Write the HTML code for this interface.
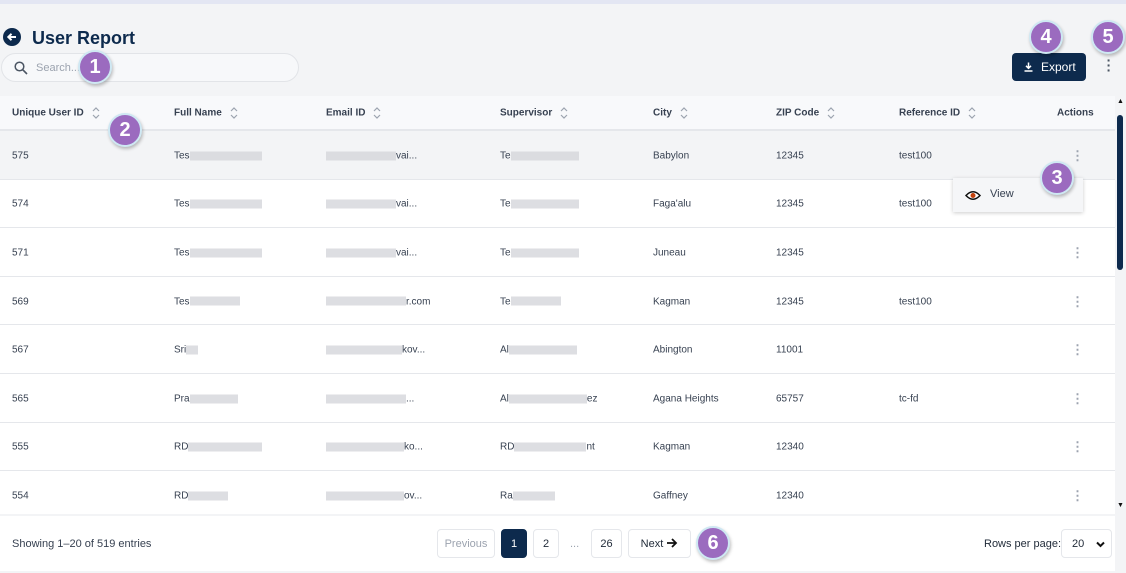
<!DOCTYPE html>
<html><head><style>
*{box-sizing:border-box;margin:0;padding:0}
body{width:1126px;height:573px;overflow:hidden;background:#f3f4f6;font-family:"Liberation Sans",sans-serif;position:relative;color:#1f2937}
.top{position:absolute;left:0;top:0;width:1126px;height:4px;background:#e3e6f3}
h1{position:absolute;left:32px;top:28px;font-size:18px;font-weight:bold;color:#0d2a4d}
.back{position:absolute;left:3px;top:28px;width:18px;height:18px;border-radius:50%;background:#0d2a4d}
.search{position:absolute;left:1px;top:53px;width:298px;height:29px;border:1px solid #e2e4e8;border-radius:15px;background:#f7f8fa;font-size:11px;color:#9ca3af;padding-left:34px;line-height:28px}
.export{position:absolute;left:1012px;top:53px;width:74px;height:28px;background:#0d2a4d;border-radius:4px;color:#fff;font-size:12px;line-height:28px;padding-left:29px}
.table{position:absolute;left:0;top:96px;width:1115px;height:418px;background:#fff;overflow:hidden}
.hdr{height:35px;background:#f8f9fb;border-bottom:2px solid #e5e7eb;position:relative;font-size:10px;font-weight:bold;color:#374151}
.row{height:48.6px;border-bottom:1px solid #e5e7eb;position:relative;font-size:10px;color:#374151}
.c{position:absolute;top:50%;transform:translateY(-50%);white-space:nowrap}
.row .c{top:52%}
.blur{display:inline-block;height:9px;background:#d4d6db;vertical-align:middle;opacity:.8}
.dots{color:#9ca3af;font-size:13px;font-weight:bold}
.sort{display:inline-block;vertical-align:middle;margin-left:8px}
.badge{position:absolute;width:34px;height:34px;border-radius:50%;background:#9b6bbf;border:2px solid #cfe8f3;color:#fff;font-weight:bold;font-size:20px;text-align:center;line-height:30px;box-shadow:1px 2px 3px rgba(0,0,0,.25)}
.foot{position:absolute;left:0;top:516px;width:1115px;height:55px;background:#fff;font-size:11px}
.pb{position:absolute;top:13px;height:29px;border:1px solid #e5e7eb;border-radius:4px;text-align:center;line-height:28px;background:#fff}
.sb{position:absolute;left:1115px;top:95px;width:11px;height:419px;background:#f3f4f6}
</style></head><body>
<div class="top"></div>
<div class="back"><svg width="18" height="18" viewBox="0 0 18 18"><path d="M13 9H5.5M8.5 5.8L5.3 9l3.2 3.2" fill="none" stroke="#fff" stroke-width="2"/></svg></div>
<h1>User Report</h1>
<div class="search"><svg style="position:absolute;left:12px;top:7px" width="14" height="14" viewBox="0 0 14 14"><circle cx="5.5" cy="5.5" r="4.3" fill="none" stroke="#4b5563" stroke-width="1.5"/><path d="M8.6 8.6L13 13" stroke="#4b5563" stroke-width="1.6"/></svg>Search...</div>
<div class="export"><svg style="position:absolute;left:12px;top:9px" width="9" height="10" viewBox="0 0 9 10"><path d="M4.5 0.5V6M2 3.8l2.5 2.5L7 3.8M0.5 9h8" fill="none" stroke="#fff" stroke-width="1.5"/></svg>Export</div>
<div style="position:absolute;left:1106px;top:58px;font-size:14px;color:#4b5563;font-weight:bold;line-height:5px;width:6px;text-align:center">·<br>·<br>·</div>
<div class="table">
<div class="hdr">
<span class="c" style="left:12px">Unique User ID<svg class="sort" width="8" height="13" viewBox="0 0 8 13"><path d="M1 4.5L4 1.5 7 4.5M1 8.5l3 3 3-3" fill="none" stroke="#9ca3af" stroke-width="1.2"/></svg></span>
<span class="c" style="left:174px">Full Name<svg class="sort" width="8" height="13" viewBox="0 0 8 13"><path d="M1 4.5L4 1.5 7 4.5M1 8.5l3 3 3-3" fill="none" stroke="#9ca3af" stroke-width="1.2"/></svg></span>
<span class="c" style="left:326px">Email ID<svg class="sort" width="8" height="13" viewBox="0 0 8 13"><path d="M1 4.5L4 1.5 7 4.5M1 8.5l3 3 3-3" fill="none" stroke="#9ca3af" stroke-width="1.2"/></svg></span>
<span class="c" style="left:500px">Supervisor<svg class="sort" width="8" height="13" viewBox="0 0 8 13"><path d="M1 4.5L4 1.5 7 4.5M1 8.5l3 3 3-3" fill="none" stroke="#9ca3af" stroke-width="1.2"/></svg></span>
<span class="c" style="left:653px">City<svg class="sort" width="8" height="13" viewBox="0 0 8 13"><path d="M1 4.5L4 1.5 7 4.5M1 8.5l3 3 3-3" fill="none" stroke="#9ca3af" stroke-width="1.2"/></svg></span>
<span class="c" style="left:776px">ZIP Code<svg class="sort" width="8" height="13" viewBox="0 0 8 13"><path d="M1 4.5L4 1.5 7 4.5M1 8.5l3 3 3-3" fill="none" stroke="#9ca3af" stroke-width="1.2"/></svg></span>
<span class="c" style="left:899px">Reference ID<svg class="sort" width="8" height="13" viewBox="0 0 8 13"><path d="M1 4.5L4 1.5 7 4.5M1 8.5l3 3 3-3" fill="none" stroke="#9ca3af" stroke-width="1.2"/></svg></span>
<span class="c" style="left:1057px">Actions</span>
</div>
<div class="row" style="background:#f3f4f6"><span class="c" style="left:12px">575</span><span class="c" style="left:174px">Tes<span class="blur" style="width:72px"></span></span><span class="c" style="left:326px"><span class="blur" style="width:70px"></span>vai...</span><span class="c" style="left:500px">Te<span class="blur" style="width:68px"></span></span><span class="c" style="left:653px">Babylon</span><span class="c" style="left:776px">12345</span><span class="c" style="left:899px">test100</span><span class="c dots" style="left:1071px">⋮</span></div>
<div class="row"><span class="c" style="left:12px">574</span><span class="c" style="left:174px">Tes<span class="blur" style="width:72px"></span></span><span class="c" style="left:326px"><span class="blur" style="width:70px"></span>vai...</span><span class="c" style="left:500px">Te<span class="blur" style="width:68px"></span></span><span class="c" style="left:653px">Faga'alu</span><span class="c" style="left:776px">12345</span><span class="c" style="left:899px">test100</span></div>
<div class="row"><span class="c" style="left:12px">571</span><span class="c" style="left:174px">Tes<span class="blur" style="width:72px"></span></span><span class="c" style="left:326px"><span class="blur" style="width:70px"></span>vai...</span><span class="c" style="left:500px">Te<span class="blur" style="width:68px"></span></span><span class="c" style="left:653px">Juneau</span><span class="c" style="left:776px">12345</span><span class="c dots" style="left:1071px">⋮</span></div>
<div class="row"><span class="c" style="left:12px">569</span><span class="c" style="left:174px">Tes<span class="blur" style="width:50px"></span></span><span class="c" style="left:326px"><span class="blur" style="width:80px"></span>r.com</span><span class="c" style="left:500px">Te<span class="blur" style="width:50px"></span></span><span class="c" style="left:653px">Kagman</span><span class="c" style="left:776px">12345</span><span class="c" style="left:899px">test100</span><span class="c dots" style="left:1071px">⋮</span></div>
<div class="row"><span class="c" style="left:12px">567</span><span class="c" style="left:174px">Sri<span class="blur" style="width:12px"></span></span><span class="c" style="left:326px"><span class="blur" style="width:76px"></span>kov...</span><span class="c" style="left:500px">Al<span class="blur" style="width:68px"></span></span><span class="c" style="left:653px">Abington</span><span class="c" style="left:776px">11001</span><span class="c dots" style="left:1071px">⋮</span></div>
<div class="row"><span class="c" style="left:12px">565</span><span class="c" style="left:174px">Pra<span class="blur" style="width:48px"></span></span><span class="c" style="left:326px"><span class="blur" style="width:80px"></span>...</span><span class="c" style="left:500px">Al<span class="blur" style="width:78px"></span>ez</span><span class="c" style="left:653px">Agana Heights</span><span class="c" style="left:776px">65757</span><span class="c" style="left:899px">tc-fd</span><span class="c dots" style="left:1071px">⋮</span></div>
<div class="row"><span class="c" style="left:12px">555</span><span class="c" style="left:174px">RD<span class="blur" style="width:74px"></span></span><span class="c" style="left:326px"><span class="blur" style="width:78px"></span>ko...</span><span class="c" style="left:500px">RD<span class="blur" style="width:72px"></span>nt</span><span class="c" style="left:653px">Kagman</span><span class="c" style="left:776px">12340</span><span class="c dots" style="left:1071px">⋮</span></div>
<div class="row"><span class="c" style="left:12px">554</span><span class="c" style="left:174px">RD<span class="blur" style="width:40px"></span></span><span class="c" style="left:326px"><span class="blur" style="width:78px"></span>ov...</span><span class="c" style="left:500px">Ra<span class="blur" style="width:42px"></span></span><span class="c" style="left:653px">Gaffney</span><span class="c" style="left:776px">12340</span><span class="c dots" style="left:1071px">⋮</span></div>
</div>
<div style="position:absolute;left:953px;top:178px;width:130px;height:34px;background:#f5f6f8;box-shadow:0 1px 4px rgba(0,0,0,.2);font-size:11px;color:#374151">
<svg style="position:absolute;left:12px;top:12px" width="16" height="11" viewBox="0 0 16 11"><path d="M1 5.5Q8 -2 15 5.5Q8 13 1 5.5Z" fill="#fff" stroke="#111" stroke-width="1.5"/><circle cx="8" cy="5.5" r="2.5" fill="#c2410c"/></svg>
<span style="position:absolute;left:37px;top:10px">View</span></div>
<div class="sb"><div style="position:absolute;left:2px;top:20px;width:6px;height:155px;background:#0d2a4d;border-radius:3px"></div><div style="position:absolute;left:2px;top:3px;font-size:7px;color:#111">▲</div><div style="position:absolute;left:2px;top:407px;font-size:7px;color:#111">▼</div></div>
<div class="foot">
<span style="position:absolute;left:12px;top:22px;color:#374151">Showing 1–20 of 519 entries</span>
<div class="pb" style="left:437px;width:58px;color:#9ca3af">Previous</div>
<div class="pb" style="left:501px;width:26px;background:#0d2a4d;color:#fff;border-color:#0d2a4d">1</div>
<div class="pb" style="left:533px;width:26px">2</div>
<span style="position:absolute;left:570px;top:22px;color:#9ca3af">...</span>
<div class="pb" style="left:591px;width:31px">26</div>
<div class="pb" style="left:628px;width:63px">Next <svg width="12" height="10" viewBox="0 0 12 10" style="vertical-align:-1px"><path d="M1 5h9M6 1l4 4-4 4" fill="none" stroke="#111" stroke-width="1.8"/></svg></div>
<span style="position:absolute;left:984px;top:22px">Rows per page:</span>
<div class="pb" style="left:1061px;width:51px;text-align:left;padding-left:10px">20 <svg style="position:absolute;right:6px;top:11px" width="9" height="7" viewBox="0 0 9 7"><path d="M1 1.5l3.5 3.5L8 1.5" fill="none" stroke="#111" stroke-width="2"/></svg></div>
</div>
<div class="badge" style="left:78px;top:50px">1</div>
<div class="badge" style="left:108px;top:113px">2</div>
<div class="badge" style="left:1040px;top:161px">3</div>
<div class="badge" style="left:1029px;top:20px">4</div>
<div class="badge" style="left:1091px;top:20px">5</div>
<div class="badge" style="left:696px;top:526px">6</div>
</body></html>
